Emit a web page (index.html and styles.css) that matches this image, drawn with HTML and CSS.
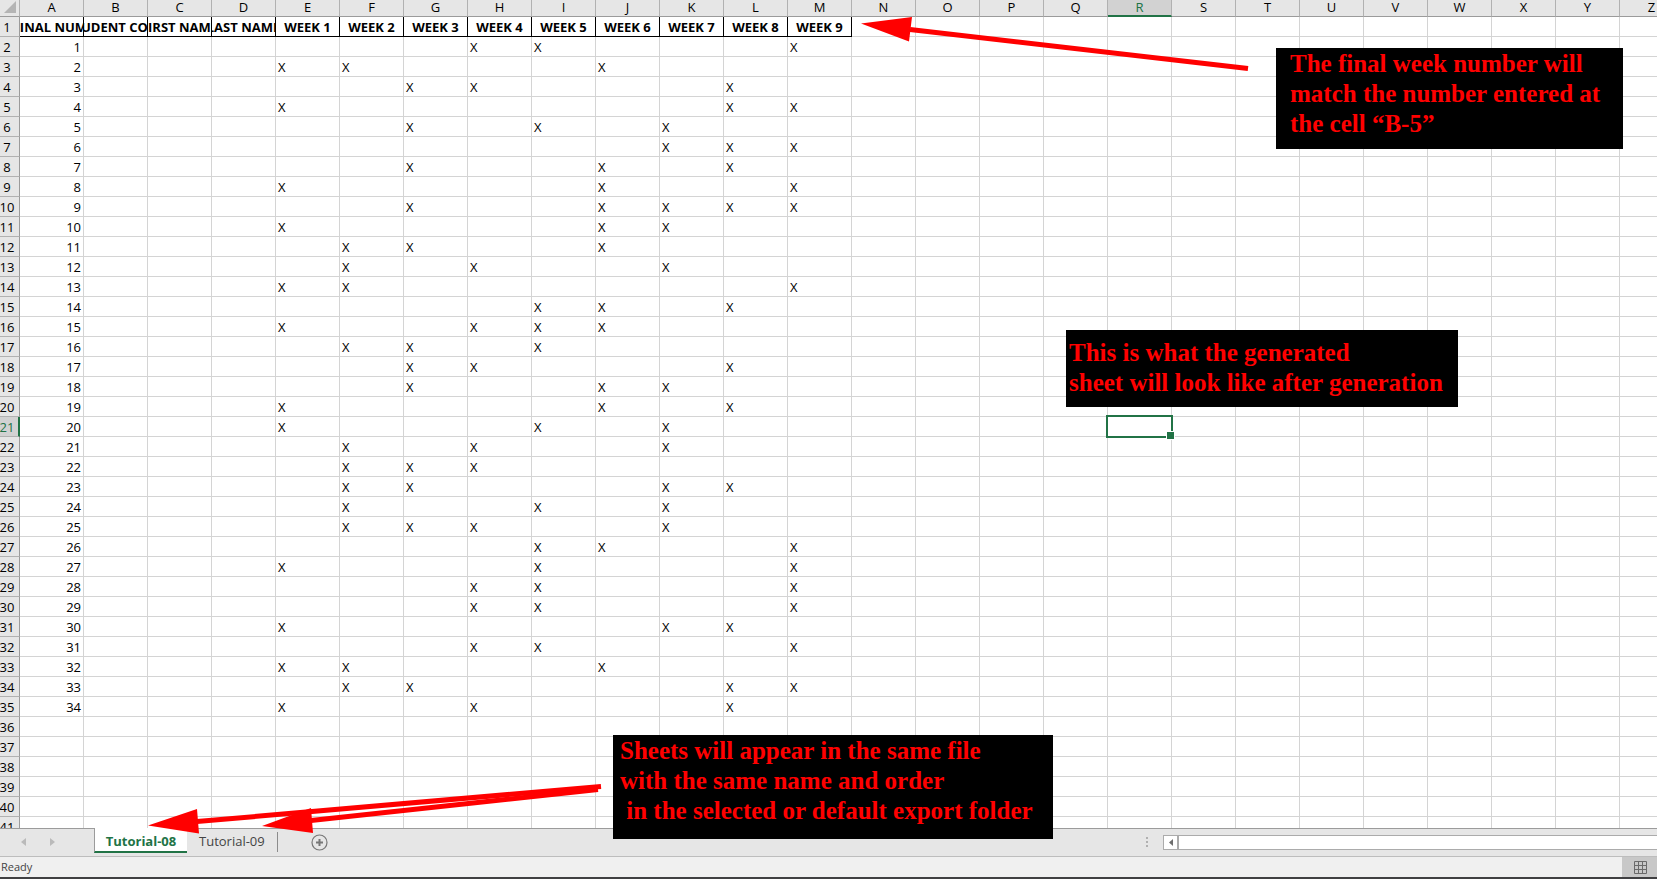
FILE: index.html
```html
<!DOCTYPE html>
<html lang="en">
<head>
<meta charset="utf-8">
<title>Tutorial-08</title>
<link rel="stylesheet" href="styles.css">
</head>
<body>
<div class="app">
  <main class="sheet">
    <table class="grid" id="grid"></table>
  </main>

  <nav class="tabbar" aria-label="Sheets">
    <div class="tab-nav">
      <button class="nav-btn" aria-label="Previous sheet"><svg width="5" height="8" viewBox="0 0 5 8"><path d="M5 0v8L0 4z"/></svg></button>
      <button class="nav-btn" aria-label="Next sheet"><svg width="5" height="8" viewBox="0 0 5 8"><path d="M0 0v8l5-4z"/></svg></button>
    </div>
    <button class="tab tab-active">Tutorial-08</button>
    <button class="tab">Tutorial-09</button>
    <span class="tab-divider"></span>
    <button class="add-btn" aria-label="New sheet">
      <svg width="17" height="17" viewBox="0 0 17 17"><circle cx="8.500" cy="8.500" r="7.500" fill="none" stroke="#777" stroke-width="1.200"/><path d="M8.500 5v7M5 8.500h7" stroke="#777" stroke-width="2"/></svg>
    </button>
    <div class="hscroll-area">
      <svg class="grip" width="2" height="10" viewBox="0 0 2 10"><path d="M0 0h2v2H0zM0 4h2v2H0zM0 8h2v2H0z"/></svg>
      <div class="hscroll">
        <button class="scroll-btn" aria-label="Scroll left"><svg width="4" height="7" viewBox="0 0 4 7"><path d="M4 0v7L0 3.500z"/></svg></button>
        <div class="scroll-thumb"></div>
      </div>
    </div>
  </nav>

  <footer class="status">
    <span>Ready</span>
    <button class="view-btn" aria-label="Normal view">
      <svg width="13" height="13" viewBox="0 0 13 13"><path d="M.5.5h12v12H.5zM4.500.5v12M8.500.5v12M.5 4.500h12M.5 8.500h12" fill="none" stroke="#6a6a6a"/></svg>
    </button>
  </footer>

  <p class="note note-week">The final week number will<br>match the number entered at<br>the cell “B-5”</p>
  <p class="note note-result">This is what the generated<br>sheet will look like after generation</p>
  <p class="note note-export">Sheets will appear in the same file<br>with the same name and order<br>&nbsp;in the selected or default export folder</p>

  <svg class="arrows" width="1300" height="879" viewBox="0 0 1300 879" aria-hidden="true">
    <g fill="#f00" stroke="#f00" stroke-width="5">
      <path d="M910 29.500 1248 68.500"/>
      <path d="M197 821.500 601 786.500"/>
      <path d="M311 820.500 598 789.500"/>
      <path stroke="none" d="M861 23.500 912 17 909 41.500zM148 825.500 197 809l2 24.500zM262 826l49-18 2 25z"/>
    </g>
  </svg>
</div>
<script src="sheet.js"></script>
</body>
</html>
```
FILE: styles.css
```css
* { box-sizing: border-box; }

body {
  margin: 0;
  font-family: "Open Sans", "Noto Sans", sans-serif;
  font-size: 13px;
  color: #000;
}

button {
  padding: 0;
  border: 0;
  background: none;
  font: inherit;
  color: inherit;
}

svg { display: block; }

.app {
  position: relative;
  display: flex;
  flex-direction: column;
  height: 100vh;
  overflow: hidden;
  border-bottom: 2px solid #404042;
}

.sheet {
  flex: 1;
  min-height: 0;
  overflow: hidden;
  background: #fff;
}

/* Cells */
.grid {
  table-layout: fixed;
  width: 1px;
  border-collapse: separate;
  border-spacing: 0;
}

.col-index { width: 20px; }
.col { width: 64px; }

.grid th,
.grid td {
  height: 20px;
  padding: 1px 2px 0;
  border-right: 1px solid #d4d4d4;
  border-bottom: 1px solid #d4d4d4;
  line-height: 18px;
  font-weight: 400;
  text-align: left;
  white-space: nowrap;
}

.grid .col-head {
  height: 17px;
  padding: 0 0 2px;
  background: #e6e6e6;
  border-right-color: #b1b1b1;
  border-bottom-color: #9b9b9b;
  line-height: 14px;
  text-align: center;
}

.grid .row-head {
  padding: 1px 5px 0 0;
  background: #e6e6e6;
  border-right-color: #9b9b9b;
  border-bottom-color: #b1b1b1;
}

.grid .row-head span {
  display: flex;
  justify-content: center;
}

.corner svg { margin: 0 0 0 4px; }

.grid .col-head.current {
  padding-bottom: 1px;
  background: #d2d2d2;
  border-bottom: 2px solid #217346;
  color: #217346;
}

.grid .row-head.current {
  padding-right: 4px;
  background: #d2d2d2;
  border-right: 2px solid #217346;
  color: #217346;
}

.grid .num { text-align: right; }

.grid .title {
  padding: 1px 0 0;
  border-color: #000;
  font-weight: 700;
}

.title span {
  display: flex;
  justify-content: center;
  overflow: hidden;
}

.grid .selected { position: relative; }

.selected::before {
  content: "";
  position: absolute;
  inset: -2px;
  border: 2px solid #217346;
}

.selected::after {
  content: "";
  position: absolute;
  right: -4px;
  bottom: -4px;
  width: 7px;
  height: 7px;
  border: 1px solid #fff;
  background: #217346;
}

/* Sheet tabs */
.tabbar {
  display: flex;
  height: 29px;
  background: #e6e6e6;
  border-top: 1px solid #9b9b9b;
  border-bottom: 1px solid #bdbdbd;
}

.tab-nav {
  display: flex;
  align-items: center;
  gap: 24px;
  width: 94px;
  padding: 0 0 2px 21px;
  fill: #bababa;
}

.tab {
  height: 25px;
  padding: 0 12px;
  line-height: 25px;
  color: #444;
}

.tab-active {
  width: 93px;
  margin-top: -1px;
  padding: 3px 0 0;
  background: #fff;
  border-left: 1px solid #9b9b9b;
  border-bottom: 2px solid #217346;
  line-height: 20px;
  font-weight: 700;
  color: #217346;
}

.tab-divider {
  width: 1px;
  height: 20px;
  margin: 3px 33px 0 0;
  background: #8c8c8c;
}

.add-btn { height: 27px; }

.hscroll-area {
  display: flex;
  align-items: center;
  gap: 15px;
  width: 511px;
  margin-left: auto;
  padding-bottom: 1px;
}

.grip { fill: #b0b0b0; }

.hscroll {
  display: flex;
  flex: 1;
  height: 15px;
  border: 1px solid #ababab;
  border-right: 0;
  background: #fff;
}

.scroll-btn {
  display: flex;
  align-items: center;
  justify-content: center;
  width: 13px;
  fill: #6e6e6e;
}

.scroll-thumb {
  flex: 1;
  border-left: 2px solid #ababab;
}

/* Status bar */
.status {
  display: flex;
  justify-content: space-between;
  height: 20px;
  padding-left: 1px;
  background: #f0f0f0;
  font-size: 11px;
  line-height: 20px;
  color: #444;
}

.view-btn {
  width: 35px;
  padding: 0 0 0 12px;
  background: #c8c8c8;
}

/* Annotations */
.note {
  position: absolute;
  margin: 0;
  background: #000;
  color: #f00;
  font: 700 25px/30px "Liberation Serif", serif;
  white-space: nowrap;
}

.note-week {
  left: 1276px;
  top: 48px;
  width: 347px;
  height: 101px;
  padding: 1px 14px;
}

.note-result {
  left: 1066px;
  top: 330px;
  width: 392px;
  height: 77px;
  padding: 8px 3px;
}

.note-export {
  left: 613px;
  top: 735px;
  width: 440px;
  height: 104px;
  padding: 1px 7px;
}

.arrows {
  position: absolute;
  left: 0;
  top: 0;
  pointer-events: none;
}
```
FILE: sheet.js
```js
const columns = [..."ABCDEFGHIJKLMNOPQRSTUVWXYZ"];
const titles = ["ORDINAL NUMBER", "STUDENT CODE", "FIRST NAME", "LAST NAME",
  "WEEK 1", "WEEK 2", "WEEK 3", "WEEK 4", "WEEK 5", "WEEK 6", "WEEK 7", "WEEK 8", "WEEK 9"];

// Weeks assigned to each student, in order of ordinal number.
const weeks = ["459", "126", "348", "189", "357", "789", "368", "169", "36789", "167",
  "236", "247", "129", "568", "1456", "235", "348", "367", "168", "157",
  "247", "234", "2378", "257", "2347", "569", "159", "459", "459", "178",
  "459", "126", "2389", "148"];

const selected = { column: "R", row: 21 };
const rowCount = 41;

function cell(column, index, row) {
  if (row === 1 && titles[index]) return `<th class="title" scope="col"><span>${titles[index]}</span></th>`;
  if (column === selected.column && row === selected.row) return '<td class="selected"></td>';
  const plan = weeks[row - 2];
  if (plan && index === 0) return `<td class="num">${row - 1}</td>`;
  if (plan && index > 3 && [...plan].includes(String(index - 3))) return "<td>X</td>";
  return "<td></td>";
}

let html = '<colgroup><col class="col-index">' + columns.map(() => '<col class="col">').join("") + "</colgroup>";
html += '<thead><tr><th class="col-head corner"><svg width="12" height="12" viewBox="0 0 12 12"><path d="M12 0v12H0z" fill="#b4b4b4"/></svg></th>';
html += columns.map(c => `<th class="col-head${c === selected.column ? " current" : ""}" scope="col">${c}</th>`).join("");
html += "</tr></thead><tbody>";
for (let row = 1; row <= rowCount; row++) {
  html += `<tr><th class="row-head${row === selected.row ? " current" : ""}" scope="row"><span>${row}</span></th>`;
  html += columns.map((c, i) => cell(c, i, row)).join("") + "</tr>";
}
document.getElementById("grid").innerHTML = html + "</tbody>";
```
